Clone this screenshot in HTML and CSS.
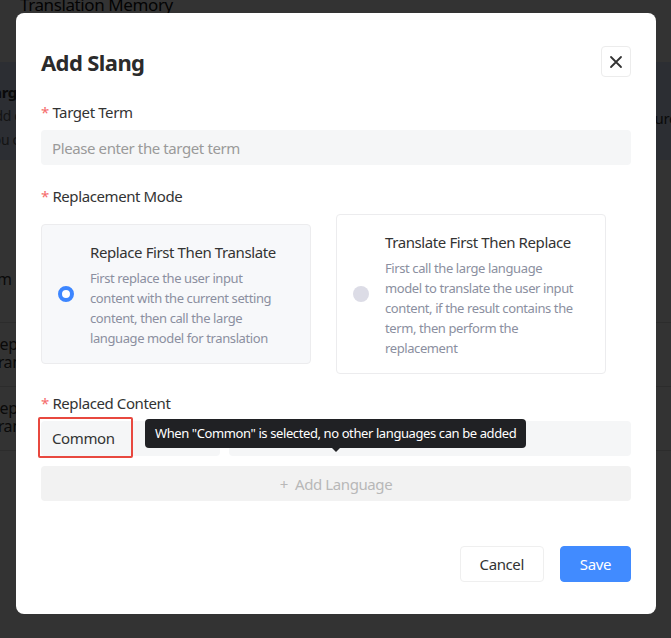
FILE: index.html
```html
<!DOCTYPE html>
<html lang="en">
<head>
    <meta charset="UTF-8">
    <meta name="viewport" content="width=device-width, initial-scale=1.0">
    <title>Add Slang</title>
    <link rel="stylesheet" href="styles.css">
</head>
<body>
    <!-- page behind the dialog -->
    <div class="page">
        <div class="page-title">Translation Memory</div>
        <div class="banner">
            <div class="banner-title">Target Term Replacement</div>
            <div class="banner-text">Add custom terms and the replaced content will be used</div>
            <div class="banner-text">You can set how and when the replacement happens</div>
            <div class="banner-right">Configure</div>
        </div>
        <div class="row row-single">Item</div>
        <div class="row">
            <div>Replace First</div>
            <div>Translate</div>
        </div>
        <div class="row">
            <div>Replace First</div>
            <div>Translate</div>
        </div>
    </div>

    <div class="mask"></div>

    <div class="dialog">
        <div class="dialog-header">
            <h2>Add Slang</h2>
            <button class="close-btn" aria-label="Close">
                <svg width="14" height="14" viewBox="0 0 14 14">
                    <path d="M2 2 L12 12 M12 2 L2 12" stroke="#333" stroke-width="1.8" stroke-linecap="round"/>
                </svg>
            </button>
        </div>

        <div class="field">
            <label class="field-label"><span class="req">*</span> Target Term</label>
            <input class="text-input" type="text" placeholder="Please enter the target term">
        </div>

        <div class="field">
            <label class="field-label"><span class="req">*</span> Replacement Mode</label>
            <div class="modes">
                <div class="mode-card active">
                    <span class="radio"></span>
                    <div class="mode-body">
                        <div class="mode-title">Replace First Then Translate</div>
                        <div class="mode-desc">First replace the user input content with the current setting content, then call the large language model for translation</div>
                    </div>
                </div>
                <div class="mode-card">
                    <span class="radio"></span>
                    <div class="mode-body">
                        <div class="mode-title">Translate First Then Replace</div>
                        <div class="mode-desc">First call the large language model to translate the user input content, if the result contains the term, then perform the replacement</div>
                    </div>
                </div>
            </div>
        </div>

        <div class="field field-content">
            <label class="field-label"><span class="req">*</span> Replaced Content</label>
            <div class="lang-row">
                <div class="lang-select">Common</div>
                <div class="lang-input"></div>
                <div class="highlight"></div>
                <div class="tooltip">When "Common" is selected, no other languages can be added</div>
            </div>
            <button class="add-lang">+&nbsp;&nbsp;Add Language</button>
        </div>

        <div class="dialog-footer">
            <button class="btn">Cancel</button>
            <button class="btn btn-primary">Save</button>
        </div>
    </div>
</body>
</html>
```

FILE: styles.css
```css
body {
    margin: 0;
    font-family: "Noto Sans", "Open Sans", sans-serif;
    letter-spacing: -0.4px;
    background-color: #fff;
    color: #333;
    overflow: hidden;
    height: 638px;
}
.page {
    height: 638px;
}
.page-title {
    font-size: 17px;
    line-height: 24px;
    margin-top: -7px;
    padding-left: 20px;
    color: #111;
}
.banner {
    position: relative;
    margin-top: 45px;
    height: 98px;
    background-color: #d9e4ff;
    padding: 18px 0 0 0;
    box-sizing: border-box;
    margin-left: -14px;
}
.banner-title {
    font-weight: bold;
    font-size: 15px;
    line-height: 24px;
}
.banner-text {
    font-size: 14px;
    line-height: 24px;
    color: #666;
}
.banner-right {
    position: absolute;
    right: -6px;
    top: 46px;
    font-size: 15px;
}
.row {
    border-bottom: 1px solid #ddd;
    height: 64px;
    font-size: 16px;
    line-height: 18px;
    padding-top: 12px;
    box-sizing: border-box;
    margin-left: -10px;
}
.row-single {
    height: 163px;
    padding-top: 110px;
    margin-left: -22px;
}
.mask {
    position: fixed;
    inset: 0;
    background: rgba(0, 0, 0, 0.8);
}
.dialog {
    position: fixed;
    left: 16px;
    top: 13px;
    width: 640px;
    height: 601px;
    box-sizing: border-box;
    padding: 33px 25px 32px;
    background: #fff;
    border-radius: 8px;
    display: flex;
    flex-direction: column;
}
.dialog-header {
    display: flex;
    justify-content: space-between;
    align-items: center;
    height: 31px;
}
.dialog-header h2 {
    margin: 0;
    font-size: 22px;
    font-weight: bold;
    letter-spacing: -0.6px;
    color: #2b2b2b;
}
.close-btn {
    width: 30px;
    height: 31px;
    border: 1px solid #ececec;
    border-radius: 4px;
    background: #fff;
    display: flex;
    align-items: center;
    justify-content: center;
    padding: 0;
}
.field {
    margin-top: 24px;
}
.field + .field {
    margin-top: 20px;
}
.field + .field-content {
    margin-top: 18px;
}
.field-label {
    display: block;
    font-size: 15px;
    line-height: 22px;
    margin-bottom: 7px;
    color: #333;
}
.req {
    color: #f56c6c;
}
.text-input {
    width: 100%;
    box-sizing: border-box;
    height: 35px;
    border: none;
    border-radius: 4px;
    background: #f5f6f7;
    padding: 0 11px;
    font-family: inherit;
    letter-spacing: inherit;
    font-size: 15px;
    outline: none;
}
.text-input::placeholder {
    color: #9a9a9a;
}
.modes {
    display: flex;
    align-items: center;
    gap: 25px;
}
.mode-card {
    width: 270px;
    box-sizing: border-box;
    border: 1px solid #ececee;
    border-radius: 4px;
    padding: 15px 24px 15px 16px;
    display: flex;
    align-items: center;
    gap: 16px;
    background: #fff;
}
.mode-card.active {
    background: #f7f8fa;
}
.radio {
    flex: none;
    width: 16px;
    height: 16px;
    border-radius: 50%;
    background: #dcdce6;
    box-sizing: border-box;
}
.active .radio {
    background: #fff;
    border: 4px solid #3d86ff;
}
.mode-title {
    font-size: 15px;
    line-height: 24px;
    color: #333;
    margin-bottom: 4px;
    white-space: nowrap;
}
.mode-desc {
    font-size: 13px;
    line-height: 20px;
    color: #8b8fa0;
}
.lang-row {
    position: relative;
    display: flex;
    gap: 9px;
    height: 35px;
}
.lang-select {
    width: 179px;
    background: #f5f6f7;
    border-radius: 4px;
    font-size: 15px;
    line-height: 35px;
    padding-left: 11px;
    box-sizing: border-box;
}
.lang-input {
    flex: 1;
    background: #f5f6f7;
    border-radius: 4px;
}
.highlight {
    position: absolute;
    left: -3px;
    top: -4px;
    width: 95px;
    height: 41px;
    box-sizing: border-box;
    border: 2px solid #e8483f;
    border-radius: 2px;
}
.tooltip {
    position: absolute;
    left: 104px;
    top: -2px;
    height: 29px;
    padding: 0 10px;
    background: #202124;
    color: #fff;
    border-radius: 4px;
    font-size: 13px;
    line-height: 29px;
    white-space: nowrap;
}
.tooltip::after {
    content: "";
    position: absolute;
    left: 50%;
    bottom: -4px;
    margin-left: -4px;
    border-left: 4px solid transparent;
    border-right: 4px solid transparent;
    border-top: 4px solid #202124;
}
.add-lang {
    margin-top: 10px;
    width: 100%;
    height: 35px;
    border: none;
    border-radius: 4px;
    background: #f2f2f2;
    color: #b8b8b8;
    font-family: inherit;
    letter-spacing: inherit;
    font-size: 15px;
}
.dialog-footer {
    margin-top: auto;
    display: flex;
    justify-content: flex-end;
    gap: 16px;
}
.btn {
    height: 36px;
    padding: 0 19px;
    border: 1px solid #efefef;
    border-radius: 4px;
    background: #fff;
    color: #333;
    font-family: inherit;
    letter-spacing: inherit;
    font-size: 15px;
}
.btn-primary {
    background: #418bff;
    border-color: #418bff;
    color: #fff;
}
```
